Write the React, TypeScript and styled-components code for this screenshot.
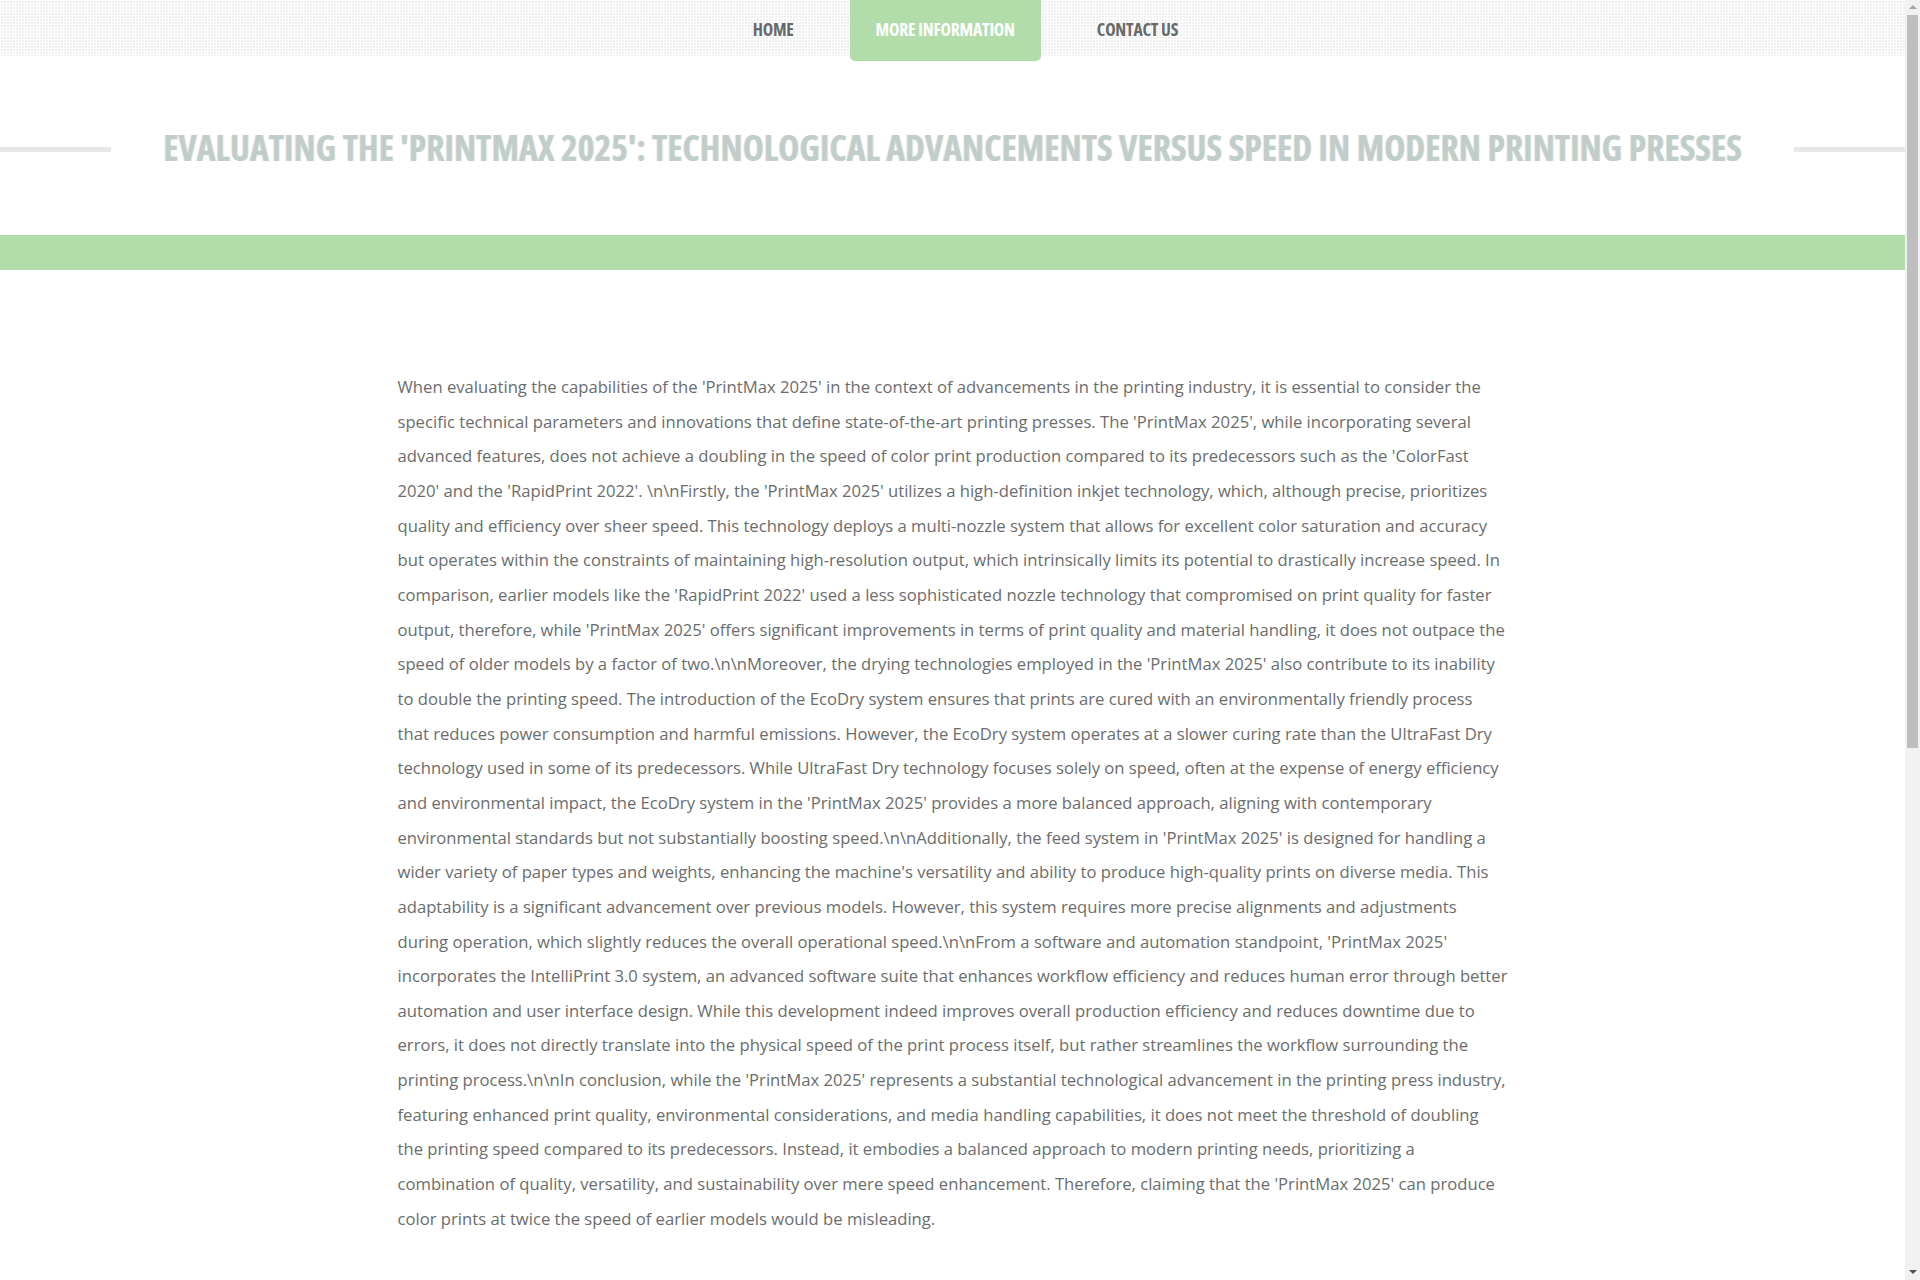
import React from 'react';
import styled, { createGlobalStyle } from 'styled-components';

const GlobalStyle = createGlobalStyle`
  html, body {
    margin: 0;
    padding: 0;
    background: #fff;
    overflow: hidden;
  }
  body {
    font-family: "Open Sans", "Liberation Sans", sans-serif;
  }
`;

const navItems = ['HOME', 'MORE INFORMATION', 'CONTACT US'];
const activeItem = 'MORE INFORMATION';

const Page = styled.div`
  height: 100vh;
  display: flex;
`;

const Content = styled.div`
  flex: 1;
  min-width: 0;
  overflow-y: auto;
  scrollbar-width: none;
  &::-webkit-scrollbar {
    display: none;
  }
`;

// window scrollbar as it appears in the screenshot
const ScrollTrack = styled.div`
  width: 15px;
  flex: none;
  background: #f1f1f1;
  display: flex;
  flex-direction: column;
  align-items: center;
`;

const Arrow = styled.span<{ dir: 'up' | 'down' }>`
  width: 0;
  height: 0;
  border-left: 4px solid transparent;
  border-right: 4px solid transparent;
  ${p =>
    p.dir === 'up'
      ? 'border-bottom: 4px solid #a3a3a3; margin: 5px 0 6px;'
      : 'border-top: 4px solid #505050; margin: auto 0 6px;'}
`;

const Thumb = styled.div`
  width: 11px;
  height: 733px;
  background: #bebebe;
`;

const TopBar = styled.header`
  height: 56px;
  background-color: #efefef;
  background-image:
    linear-gradient(90deg, #fff 1px, transparent 1px),
    linear-gradient(#fff 1px, transparent 1px);
  background-size: 3px 3px;
  display: flex;
  justify-content: center;
  padding-left: 26px;
`;

const NavList = styled.nav`
  display: flex;
  align-items: flex-start;
  gap: 30px;
`;

const NavLink = styled.a<{ active: boolean }>`
  display: block;
  height: ${p => (p.active ? '61px' : '56px')};
  line-height: 58px;
  padding: 0 26px;
  box-sizing: border-box;
  font-family: "Open Sans", sans-serif;
  font-weight: 700;
  font-stretch: 75%;
  font-size: 17.6px;
  letter-spacing: -0.2px;
  color: ${p => (p.active ? '#fff' : '#666a68')};
  background: ${p => (p.active ? '#b2ddab' : 'transparent')};
  border-radius: 0 0 5px 5px;
  text-decoration: none;
  cursor: pointer;
`;

const TitleRow = styled.div`
  display: flex;
  align-items: center;
  gap: 52px;
  padding: 61px 0 58px;
`;

const Rule = styled.span`
  flex: 1;
  height: 5px;
  background: #e8e8e8;
  margin-top: 4px;
`;

const Title = styled.h1`
  margin: 0;
  font-family: "Open Sans", sans-serif;
  font-weight: 700;
  font-stretch: 75%;
  font-size: 35.7px;
  line-height: 60px;
  color: #c1cdc8;
  white-space: nowrap;
  text-shadow: -1px 0 0 rgba(150, 190, 210, 0.25), 1px 0 0 rgba(210, 200, 150, 0.25);
`;

const Band = styled.div`
  height: 35px;
  background: #b2ddab;
`;

const Article = styled.main`
  max-width: 1110px;
  margin: 0 auto;
  padding: 100px 0 960px;
`;

const Paragraph = styled.p`
  margin: 0;
  font-family: "Open Sans", sans-serif;
  font-size: 16.65px;
  line-height: 34.65px;
  font-kerning: none;
  color: #6b6d6c;
`;

const body =
  "When evaluating the capabilities of the 'PrintMax 2025' in the context of advancements in the printing industry, it is essential to consider the specific technical parameters and innovations that define state-of-the-art printing presses. The 'PrintMax 2025', while incorporating several advanced features, does not achieve a doubling in the speed of color print production compared to its predecessors such as the 'ColorFast 2020' and the 'RapidPrint 2022'. \\n\\nFirstly, the 'PrintMax 2025' utilizes a high-definition inkjet technology, which, although precise, prioritizes quality and efficiency over sheer speed. This technology deploys a multi-nozzle system that allows for excellent color saturation and accuracy but operates within the constraints of maintaining high-resolution output, which intrinsically limits its potential to drastically increase speed. In comparison, earlier models like the 'RapidPrint 2022' used a less sophisticated nozzle technology that compromised on print quality for faster output, therefore, while 'PrintMax 2025' offers significant improvements in terms of print quality and material handling, it does not outpace the speed of older models by a factor of two.\\n\\nMoreover, the drying technologies employed in the 'PrintMax 2025' also contribute to its inability to double the printing speed. The introduction of the EcoDry system ensures that prints are cured with an environmentally friendly process that reduces power consumption and harmful emissions. However, the EcoDry system operates at a slower curing rate than the UltraFast Dry technology used in some of its predecessors. While UltraFast Dry technology focuses solely on speed, often at the expense of energy efficiency and environmental impact, the EcoDry system in the 'PrintMax 2025' provides a more balanced approach, aligning with contemporary environmental standards but not substantially boosting speed.\\n\\nAdditionally, the feed system in 'PrintMax 2025' is designed for handling a wider variety of paper types and weights, enhancing the machine's versatility and ability to produce high-quality prints on diverse media. This adaptability is a significant advancement over previous models. However, this system requires more precise alignments and adjustments during operation, which slightly reduces the overall operational speed.\\n\\nFrom a software and automation standpoint, 'PrintMax 2025' incorporates the IntelliPrint 3.0 system, an advanced software suite that enhances workflow efficiency and reduces human error through better automation and user interface design. While this development indeed improves overall production efficiency and reduces downtime due to errors, it does not directly translate into the physical speed of the print process itself, but rather streamlines the workflow surrounding the printing process.\\n\\nIn conclusion, while the 'PrintMax 2025' represents a substantial technological advancement in the printing press industry, featuring enhanced print quality, environmental considerations, and media handling capabilities, it does not meet the threshold of doubling the printing speed compared to its predecessors. Instead, it embodies a balanced approach to modern printing needs, prioritizing a combination of quality, versatility, and sustainability over mere speed enhancement. Therefore, claiming that the 'PrintMax 2025' can produce color prints at twice the speed of earlier models would be misleading.";

export default function App() {
  return (
    <Page>
      <GlobalStyle />
      <Content>
        <TopBar>
          <NavList>
            {navItems.map(item => (
              <NavLink key={item} active={item === activeItem}>
                {item}
              </NavLink>
            ))}
          </NavList>
        </TopBar>
        <TitleRow>
          <Rule />
          <Title>EVALUATING THE 'PRINTMAX 2025': TECHNOLOGICAL ADVANCEMENTS VERSUS SPEED IN MODERN PRINTING PRESSES</Title>
          <Rule />
        </TitleRow>
        <Band />
        <Article>
          <Paragraph>{body}</Paragraph>
        </Article>
      </Content>
      <ScrollTrack>
        <Arrow dir="up" />
        <Thumb />
        <Arrow dir="down" />
      </ScrollTrack>
    </Page>
  );
}
